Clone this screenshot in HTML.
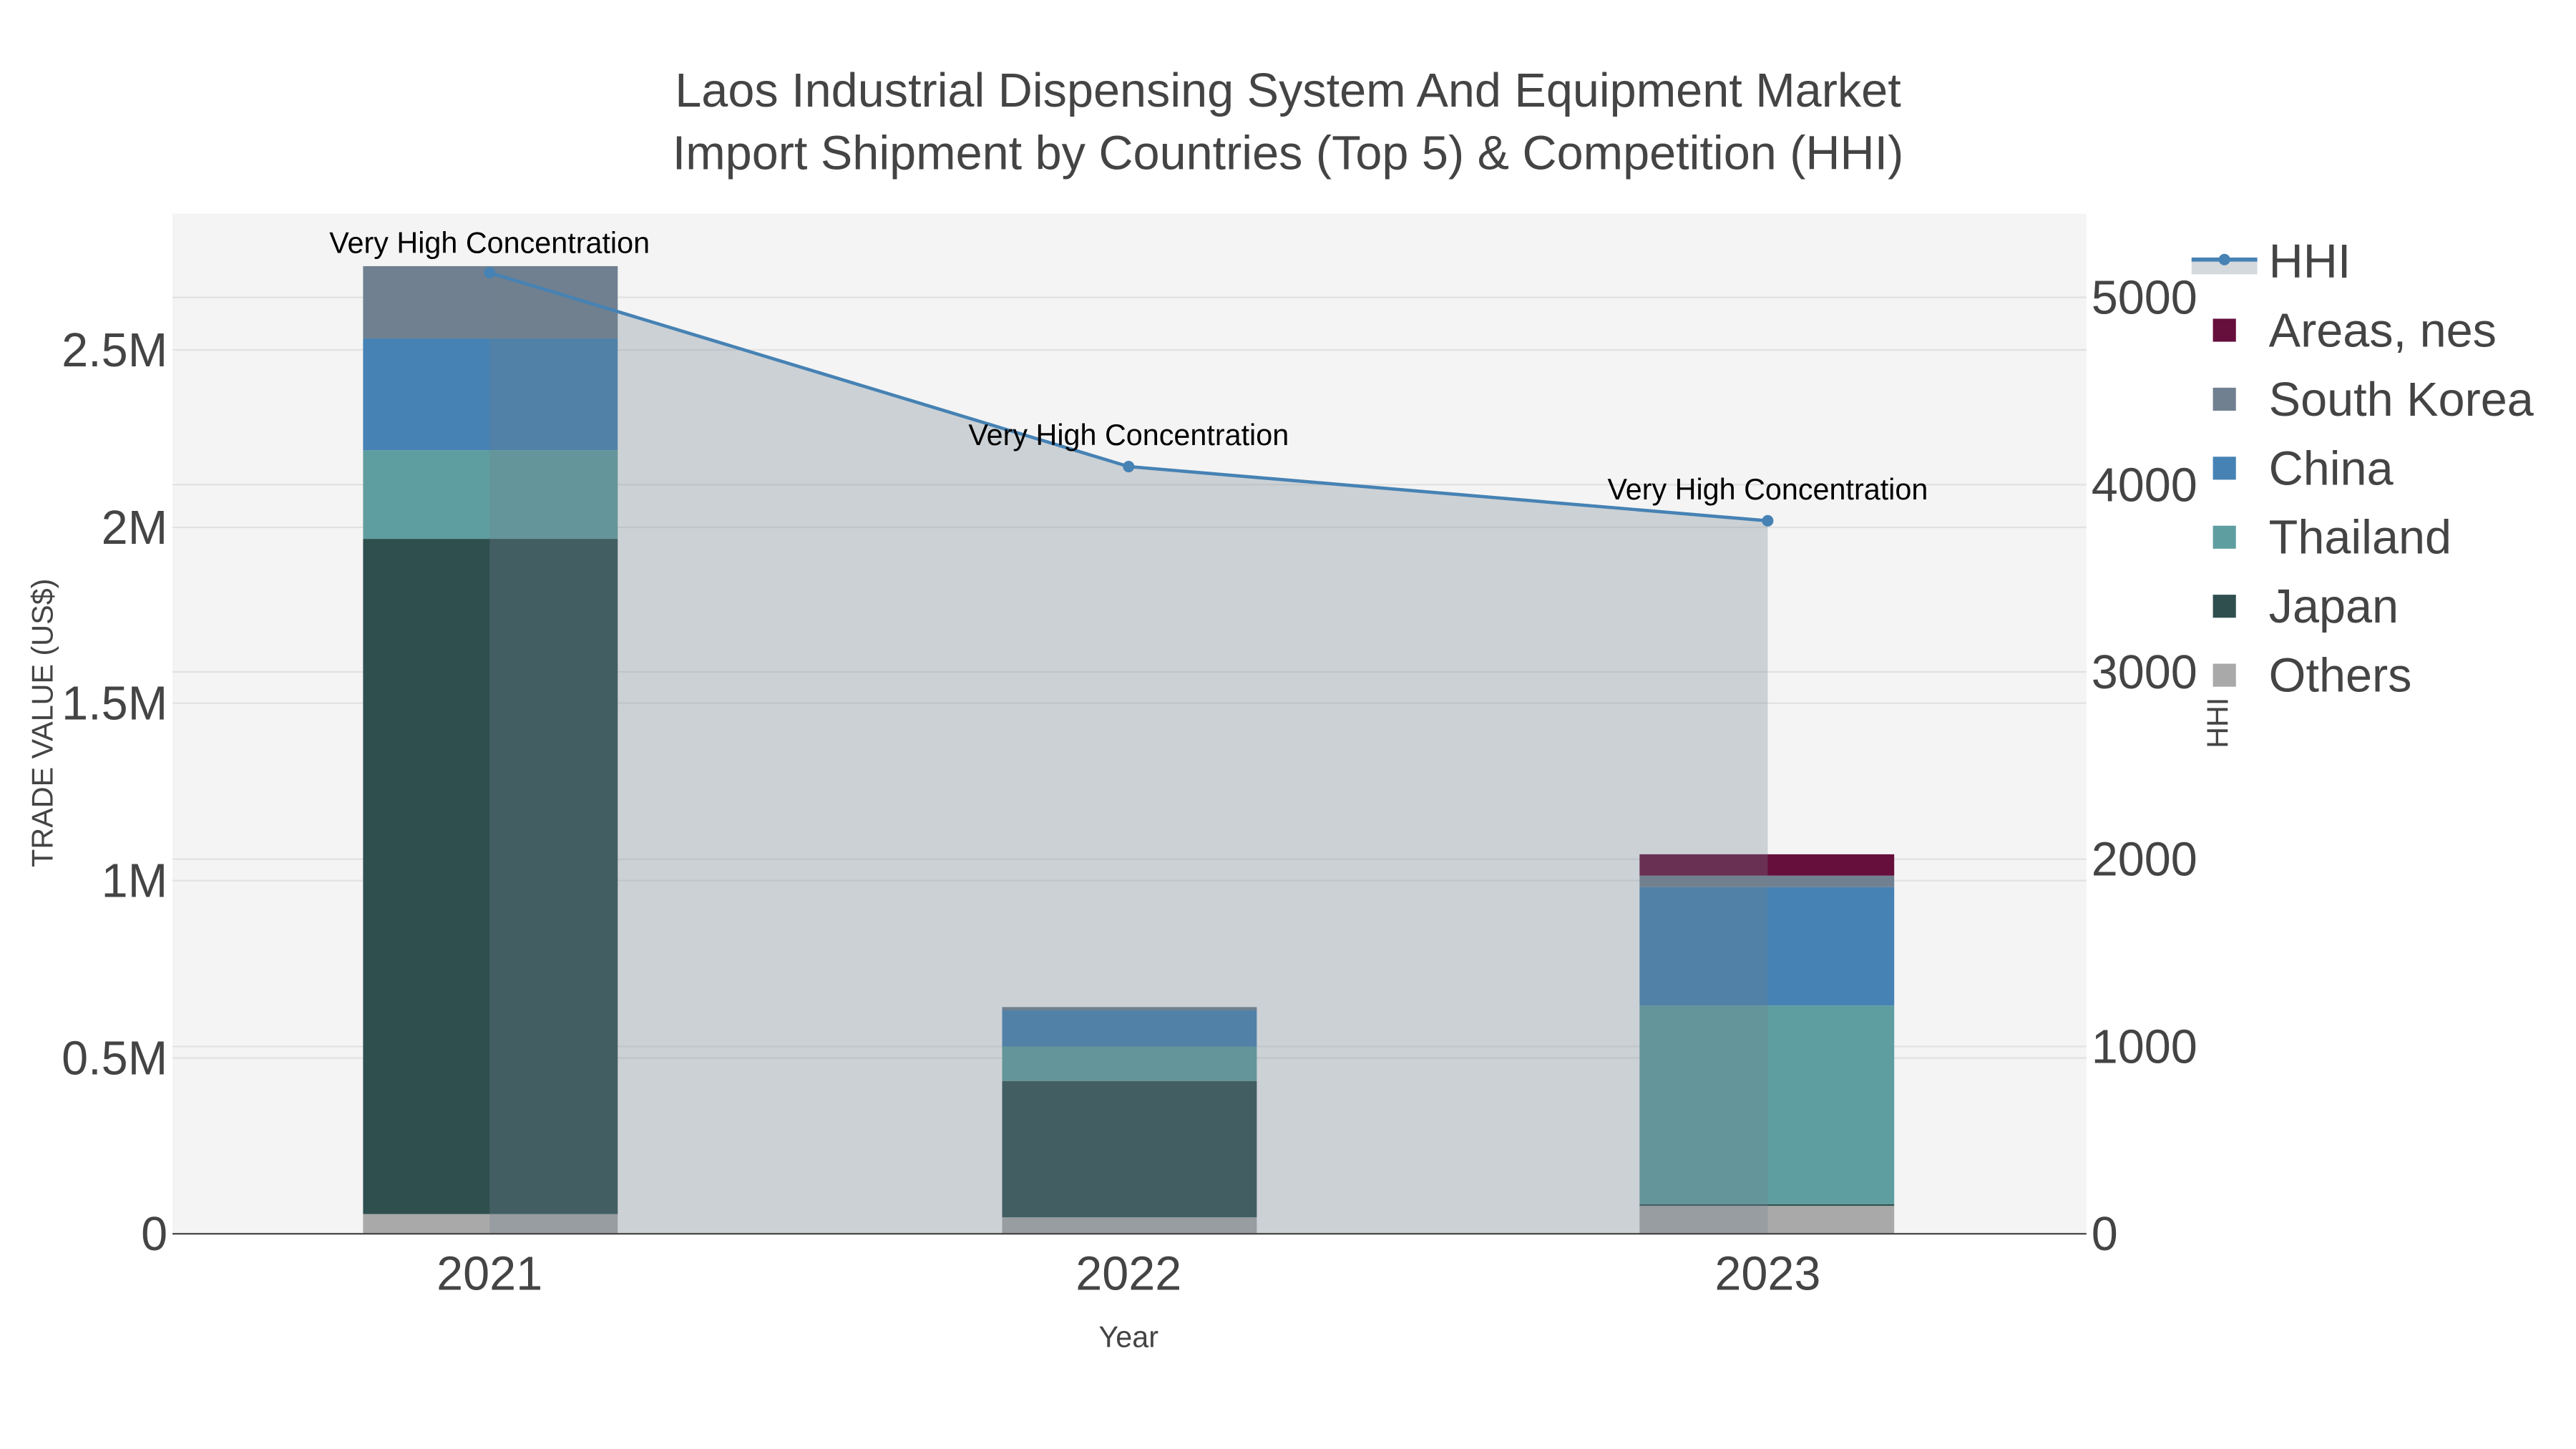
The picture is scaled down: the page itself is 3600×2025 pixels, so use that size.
<!DOCTYPE html>
<html><head><meta charset="utf-8"><style>
html,body{margin:0;padding:0;background:#fff;width:3600px;height:2025px;overflow:hidden}
svg{display:block}
text{font-family:"Liberation Sans",sans-serif}
</style></head><body>
<svg width="3600" height="2025" viewBox="0 0 1568 882" preserveAspectRatio="none" xmlns="http://www.w3.org/2000/svg">
<rect x="0" y="0" width="1568" height="882" fill="#fff"/>
<rect x="105" y="130" width="1165" height="621" fill="#f4f4f4"/>
<g stroke="#e2e2e2" stroke-width="1">
<line x1="105" x2="1270" y1="213" y2="213"/><line x1="105" x2="1270" y1="321" y2="321"/>
<line x1="105" x2="1270" y1="428" y2="428"/><line x1="105" x2="1270" y1="536" y2="536"/>
<line x1="105" x2="1270" y1="644" y2="644"/>
<line x1="105" x2="1270" y1="181" y2="181"/><line x1="105" x2="1270" y1="295" y2="295"/>
<line x1="105" x2="1270" y1="409" y2="409"/><line x1="105" x2="1270" y1="523" y2="523"/>
<line x1="105" x2="1270" y1="637" y2="637"/>
</g>
<rect x="221" y="739" width="155" height="12" fill="#a9a9a9"/>
<rect x="221" y="328" width="155" height="411" fill="#2f4f4f"/>
<rect x="221" y="274" width="155" height="54" fill="#5f9ea0"/>
<rect x="221" y="206" width="155" height="68" fill="#4682b4"/>
<rect x="221" y="162" width="155" height="44" fill="#708090"/>
<rect x="610" y="741" width="155" height="10" fill="#a9a9a9"/>
<rect x="610" y="658" width="155" height="83" fill="#2f4f4f"/>
<rect x="610" y="637" width="155" height="21" fill="#5f9ea0"/>
<rect x="610" y="615" width="155" height="22" fill="#4682b4"/>
<rect x="610" y="613" width="155" height="2" fill="#708090"/>
<rect x="998" y="734" width="155" height="17" fill="#a9a9a9"/>
<rect x="998" y="733" width="155" height="1" fill="#2f4f4f"/>
<rect x="998" y="612" width="155" height="121" fill="#5f9ea0"/>
<rect x="998" y="540" width="155" height="72" fill="#4682b4"/>
<rect x="998" y="533" width="155" height="7" fill="#708090"/>
<rect x="998" y="520" width="155" height="13" fill="#660e3c"/>
<polygon points="298,166 687,284 1076,317 1076,751 298,751" fill="#708090" fill-opacity="0.3"/>
<line x1="105" x2="1270" y1="751" y2="751" stroke="#444" stroke-width="1"/>
<polyline points="298,166 687,284 1076,317" fill="none" stroke="#4682b4" stroke-width="2"/>
<g fill="#4682b4"><circle cx="298" cy="166" r="3.5"/><circle cx="687" cy="284" r="3.5"/><circle cx="1076" cy="317" r="3.5"/></g>
<g font-size="18" fill="#000" text-anchor="middle">
<text x="298" y="154">Very High Concentration</text>
<text x="687" y="271">Very High Concentration</text>
<text x="1076" y="304">Very High Concentration</text>
</g>
<g font-size="29" fill="#444" text-anchor="middle">
<text x="784" y="65">Laos Industrial Dispensing System And Equipment Market</text>
<text x="784" y="103">Import Shipment by Countries (Top 5) &amp; Competition (HHI)</text>
</g>
<g font-size="29" fill="#444" text-anchor="end">
<text x="102" y="223">2.5M</text><text x="102" y="331">2M</text><text x="102" y="438">1.5M</text>
<text x="102" y="546">1M</text><text x="102" y="654">0.5M</text><text x="102" y="761">0</text>
</g>
<g font-size="29" fill="#444">
<text x="1273" y="191">5000</text><text x="1273" y="305">4000</text><text x="1273" y="419">3000</text>
<text x="1273" y="533">2000</text><text x="1273" y="647">1000</text><text x="1273" y="761">0</text>
</g>
<g font-size="29" fill="#444" text-anchor="middle">
<text x="298" y="785">2021</text><text x="687" y="785">2022</text><text x="1076" y="785">2023</text>
</g>
<text x="687" y="820" font-size="18" fill="#444" text-anchor="middle">Year</text>
<text transform="translate(32,440) rotate(-90)" font-size="18" fill="#444" text-anchor="middle">TRADE VALUE (US$)</text>
<text transform="translate(1356,440) rotate(-90)" font-size="18" fill="#444" text-anchor="middle">HHI</text>
<rect x="1334" y="158" width="40" height="9" fill="#708090" fill-opacity="0.3"/>
<line x1="1334" x2="1374" y1="158" y2="158" stroke="#4682b4" stroke-width="2.5"/>
<circle cx="1354" cy="158" r="3.5" fill="#4682b4"/>
<g font-size="29" fill="#444">
<text x="1381" y="169">HHI</text>
<rect x="1347" y="194" width="14" height="14" fill="#660e3c"/><text x="1381" y="211">Areas, nes</text>
<rect x="1347" y="236" width="14" height="14" fill="#708090"/><text x="1381" y="253">South Korea</text>
<rect x="1347" y="278" width="14" height="14" fill="#4682b4"/><text x="1381" y="295">China</text>
<rect x="1347" y="320" width="14" height="14" fill="#5f9ea0"/><text x="1381" y="337">Thailand</text>
<rect x="1347" y="362" width="14" height="14" fill="#2f4f4f"/><text x="1381" y="379">Japan</text>
<rect x="1347" y="404" width="14" height="14" fill="#a9a9a9"/><text x="1381" y="421">Others</text>
</g>
</svg>
</body></html>
